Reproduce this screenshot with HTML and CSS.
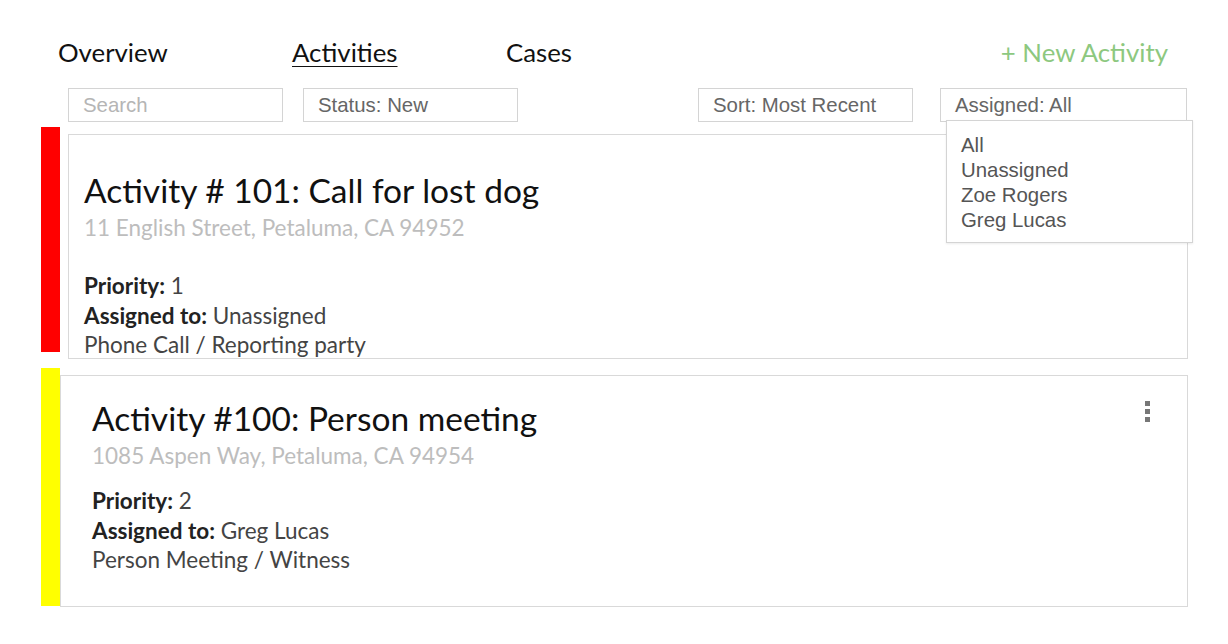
FILE: index.html
```html
<!DOCTYPE html>
<html>
<head>
<meta charset="utf-8">
<link rel="stylesheet" href="styles.css">
</head>
<body>
<div class="page">
  <nav class="nav">
    <a class="nav-item nav-overview">Overview</a>
    <a class="nav-item nav-activities active">Activities</a>
    <a class="nav-item nav-cases">Cases</a>
    <a class="nav-new">+ New Activity</a>
  </nav>
  <div class="filters">
    <div class="field field-search placeholder">Search</div>
    <div class="field field-status">Status: New</div>
    <div class="spacer"></div>
    <div class="field field-sort">Sort: Most Recent</div>
    <div class="assigned-wrap">
      <div class="field field-assigned">Assigned: All</div>
      <ul class="dropdown">
        <li>All</li>
        <li>Unassigned</li>
        <li>Zoe Rogers</li>
        <li>Greg Lucas</li>
      </ul>
    </div>
  </div>

  <div class="row row-1">
    <div class="bar bar-red"></div>
    <div class="card card-1">
      <h2 class="title">Activity # 101: Call for lost dog</h2>
      <div class="address">11 English Street, Petaluma, CA 94952</div>
      <div class="details details-1">
        <div><b>Priority:</b> 1</div>
        <div><b>Assigned to:</b> Unassigned</div>
        <div>Phone Call / Reporting party</div>
      </div>
    </div>
  </div>

  <div class="row row-2">
    <div class="bar bar-yellow"></div>
    <div class="card card-2">
      <h2 class="title">Activity #100: Person meeting</h2>
      <div class="address">1085 Aspen Way, Petaluma, CA 94954</div>
      <div class="details details-2">
        <div><b>Priority:</b> 2</div>
        <div><b>Assigned to:</b> Greg Lucas</div>
        <div>Person Meeting / Witness</div>
      </div>
      <span class="kebab"><i></i><i></i><i></i></span>
    </div>
  </div>
</div>
</body>
</html>
```

FILE: styles.css
```css
* { box-sizing: border-box; }
html, body { margin: 0; padding: 0; background: #fff; }
body { font-family: Lato, "Open Sans", sans-serif; color: #111; }

.page { padding: 0 40px 0 41px; width: 1228px; }

.nav {
  display: flex;
  align-items: baseline;
  height: 78px;
  padding-top: 37px;
  padding-left: 17px;
  font-size: 25.8px;
}
.nav-item { color: #111; text-decoration: none; }
.nav-overview { width: 234px; }
.nav-activities { width: 214px; text-decoration: underline; text-underline-offset: 4px; text-decoration-thickness: 1px; }
.nav-new { margin-left: auto; margin-right: 20px; color: #8dc87f; }

.filters {
  display: flex;
  padding-left: 27px;
  height: 49px;
  align-items: flex-start;
  padding-top: 10px;
}
.field {
  height: 34px;
  border: 1px solid #d4d4d4;
  font-family: "Liberation Sans", Arial, sans-serif;
  font-size: 20.4px;
  line-height: 32px;
  padding-left: 14px;
  color: #666;
}
.placeholder { color: #b5b5b5; }
.field-search, .field-status, .field-sort { width: 215px; }
.field-status { margin-left: 20px; }
.spacer { flex: 1; }
.assigned-wrap { position: relative; margin-left: 27px; margin-right: 1px; }
.field-assigned { width: 247px; }
.dropdown {
  position: absolute;
  top: 32px;
  left: 6px;
  width: 247px;
  height: 123px;
  margin: 0;
  padding: 12px 0 0 14px;
  list-style: none;
  background: #fff;
  border: 1px solid #d4d4d4;
  box-shadow: 0 1px 2px rgba(0,0,0,0.08);
  font-family: "Liberation Sans", Arial, sans-serif;
  font-size: 20.4px;
  line-height: 25px;
  color: #555;
  z-index: 2;
}

.row { display: flex; align-items: flex-start; }
.bar { width: 19px; flex: none; }
.bar-red { background: #ff0000; height: 225px; }
.bar-yellow { background: #ffff00; height: 238px; }

.card {
  position: relative;
  border: 1px solid #d9d9d9;
  margin-top: 7px;
  flex: 1;
}
.card-1 { margin-left: 8px; height: 225px; padding: 35px 0 0 15px; }
.row-2 { margin-top: 9px; }
.card-2 { height: 232px; padding: 22px 0 0 31px; }

.title {
  margin: 0;
  font-weight: 400;
  font-size: 33.5px;
  line-height: 40px;
  color: #111;
}
.address {
  margin-top: 3px;
  font-size: 22.5px;
  line-height: 30px;
  color: #bdbdbd;
}
.details { font-size: 22.5px; line-height: 29.5px; color: #444; }
.details b { color: #222; font-weight: 700; }
.details-1 { margin-top: 28px; }
.details-2 { margin-top: 15px; }

.kebab {
  position: absolute;
  top: 25px;
  right: 37px;
  display: flex;
  flex-direction: column;
  gap: 3px;
}
.kebab i { display: block; width: 5px; height: 5px; background: #777; }
```
